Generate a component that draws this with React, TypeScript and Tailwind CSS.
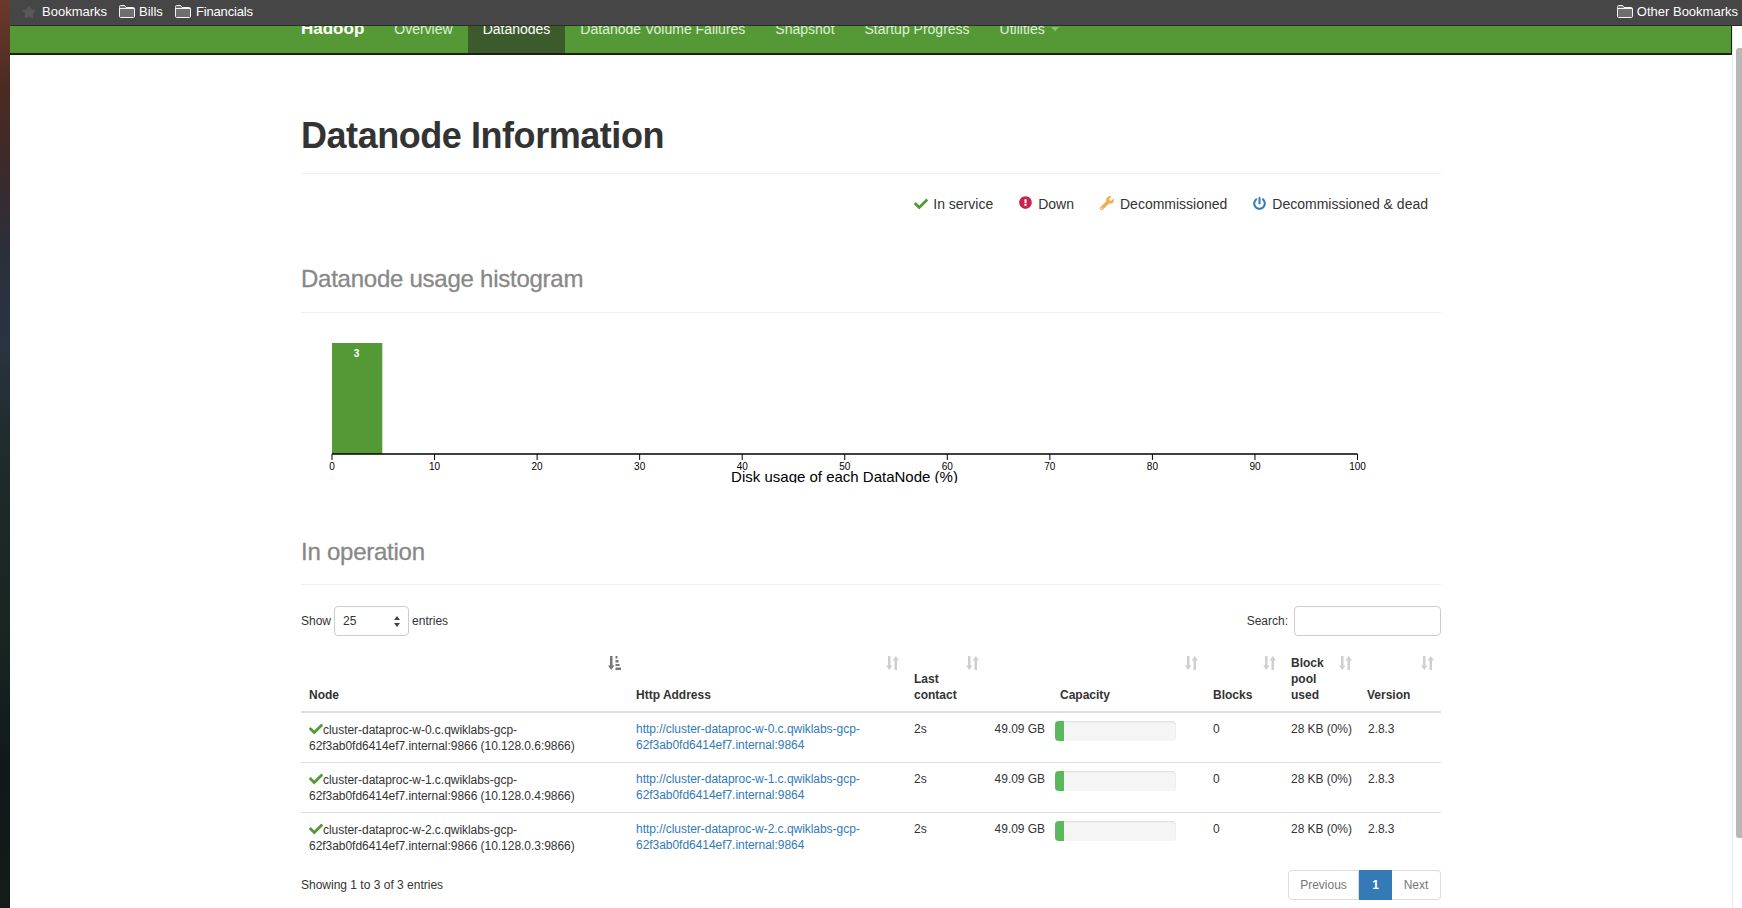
import { FaCheck, FaExclamationCircle, FaPowerOff, FaStar, FaWrench } from "react-icons/fa";

const SANS = "font-['Liberation_Sans',Arial,sans-serif]";

const navLinks = ["Overview", "Datanodes", "Datanode Volume Failures", "Snapshot", "Startup Progress", "Utilities"];

const nodes = [
  { name: "cluster-dataproc-w-0", ip: "10.128.0.6" },
  { name: "cluster-dataproc-w-1", ip: "10.128.0.4" },
  { name: "cluster-dataproc-w-2", ip: "10.128.0.3" },
];

const ticks = [0, 10, 20, 30, 40, 50, 60, 70, 80, 90, 100];

function FolderIcon() {
  return (
    <svg width="16" height="13" viewBox="0 0 16 13" className="shrink-0">
      <path d="M0.5 2.5V1.5C0.5 1 1 0.5 1.5 0.5H5.5L7 2.5H14.5C15 2.5 15.5 3 15.5 3.5V11.5C15.5 12 15 12.5 14.5 12.5H1.5C1 12.5 0.5 12 0.5 11.5V2.5Z" fill="#6f6f6f" stroke="#f4f4f4" />
      <path d="M0.5 3.5H15.5" stroke="#f4f4f4" />
    </svg>
  );
}

function SortIcon({ active = false }: { active?: boolean }) {
  return (
    <svg width="13" height="14" viewBox="0 0 13 14" className="absolute top-[9px] right-[7px]">
      {active ? (
        <g fill="#777">
          <path d="M2 0H4.5V9.5H6.5L3.2 14L0 9.5H2Z" />
          <path d="M7.5 0H9.5V2.5H7.5ZM7.5 4H10.5V6.5H7.5ZM7.5 8H11.5V10H7.5ZM7.5 11.5H13V14H7.5Z" />
        </g>
      ) : (
        <g fill="#cfcfcf">
          <path d="M2 0H4.5V9.5H6.5L3.2 14L0 9.5H2Z" />
          <path d="M8.5 14H11V4.5H13L9.8 0L6.5 4.5H8.5Z" />
        </g>
      )}
    </svg>
  );
}

function HeaderCell({ children, active, className = "", colSpan }: { children: React.ReactNode; active?: boolean; className?: string; colSpan?: number }) {
  return (
    <th colSpan={colSpan} className={`relative p-2 pr-6 text-left align-bottom font-bold ${className}`}>
      {children}
      <SortIcon active={active} />
    </th>
  );
}

function Legend() {
  return (
    <ul className="flex justify-end gap-[26px] pr-[13px] mt-[20px] h-[20px] items-center text-[14px] text-[#333]">
      <li className="flex items-center gap-[5px]">
        <FaCheck className="w-[14px] h-[14px] text-[#549936]" /> In service
      </li>
      <li className="flex items-center gap-[6px]">
        <FaExclamationCircle className="w-[13px] h-[13px] text-[#c7254e] -mt-[3px]" /> Down
      </li>
      <li className="flex items-center gap-[6px]">
        <FaWrench className="w-[14px] h-[14px] text-[#f0ad4e] -mt-[2px]" /> Decommissioned
      </li>
      <li className="flex items-center gap-[6px]">
        <FaPowerOff className="w-[13px] h-[13px] text-[#337ab7] -mt-[2px]" /> Decommissioned &amp; dead
      </li>
    </ul>
  );
}

function Histogram() {
  return (
    <svg width="1140" height="153" className="block mt-[17px]" fontFamily="Liberation Sans, Arial, sans-serif">
      <rect x="31" y="13" width="50.3" height="111" fill="#549936" />
      <text x="55.5" y="27" fontSize="10" fontWeight="bold" fill="#fff" textAnchor="middle">
        3
      </text>
      <path d="M31 124H1056.5" stroke="#000" strokeWidth="1.5" />
      {ticks.map((t) => (
        <g key={t}>
          <path d={`M${31 + t * 10.255} 124V130`} stroke="#000" />
          <text x={31 + t * 10.255} y="140" fontSize="10" textAnchor="middle" fill="#000">
            {t}
          </text>
        </g>
      ))}
      <text x="543.5" y="152" fontSize="15" textAnchor="middle" fill="#000">
        Disk usage of each DataNode (%)
      </text>
    </svg>
  );
}

function NodeTable() {
  return (
    <table className="w-full table-fixed border-collapse text-[12px] leading-[16px] text-[#333] mt-[11px]">
      <colgroup>
        <col className="w-[327px]" />
        <col className="w-[278px]" />
        <col className="w-[80px]" />
        <col className="w-[61px]" />
        <col className="w-[158px]" />
        <col className="w-[78px]" />
        <col className="w-[76px]" />
        <col className="w-[82px]" />
      </colgroup>
      <thead>
        <tr className="border-b-2 border-[#ddd]">
          <HeaderCell active>Node</HeaderCell>
          <HeaderCell>Http Address</HeaderCell>
          <HeaderCell>Last contact</HeaderCell>
          <HeaderCell colSpan={2} className="pl-[74px]">
            Capacity
          </HeaderCell>
          <HeaderCell>Blocks</HeaderCell>
          <HeaderCell>Block pool used</HeaderCell>
          <HeaderCell>Version</HeaderCell>
        </tr>
      </thead>
      <tbody className="tracking-[-0.04px]">
        {nodes.map((n) => (
          <tr key={n.name} className="border-b border-[#ddd] last:border-b-0 align-top">
            <td className="px-2 pt-[9px] pb-2">
              <FaCheck className="inline w-[14px] h-[14px] text-[#549936] -mt-[4px]" />
              {n.name}.c.qwiklabs-gcp-
              <br />
              62f3ab0fd6414ef7.internal:9866 ({n.ip}:9866)
            </td>
            <td className="p-2">
              <a className="text-[#337ab7]">
                http://{n.name}.c.qwiklabs-gcp-
                <br />
                62f3ab0fd6414ef7.internal:9864
              </a>
            </td>
            <td className="p-2">2s</td>
            <td className="py-2 pr-[2px] text-right whitespace-nowrap">49.09 GB</td>
            <td className="p-2">
              <div className="w-[121px] h-[20px] rounded bg-[#f5f5f5] shadow-[inset_0_1px_2px_rgba(0,0,0,0.1)] overflow-hidden">
                <div className="h-full w-[9px] bg-[#5cb85c]" />
              </div>
            </td>
            <td className="p-2">0</td>
            <td className="p-2 whitespace-nowrap">28 KB (0%)</td>
            <td className="p-2 pl-[9px]">2.8.3</td>
          </tr>
        ))}
      </tbody>
    </table>
  );
}

export default function App() {
  return (
    <div className={`flex h-[908px] w-[1742px] overflow-hidden bg-white ${SANS}`}>
      <div className="w-[10px] shrink-0 bg-[linear-gradient(180deg,#6a3a2b_0%,#4b2a22_10%,#3c2a2a_18%,#2b2f3c_28%,#2a3340_38%,#1f2a2a_50%,#1a2522_70%,#10181a_85%,#141c18_100%)]" />
      <div className="flex flex-col flex-1 min-w-0">
        <div className="h-[26px] shrink-0 bg-[#464646] border-b border-[#2c2c2c] flex items-center pl-[12px] pr-[4px] pb-[2px] text-[13px] text-white">
          <FaStar className="w-[14px] h-[14px] text-[#595959]" />
          <span className="ml-[6px]">Bookmarks</span>
          <span className="ml-[12px] flex items-center gap-[4px]">
            <FolderIcon /> Bills
          </span>
          <span className="ml-[12px] flex items-center gap-[5px] tracking-[-0.15px]">
            <FolderIcon /> Financials
          </span>
          <span className="ml-auto flex items-center gap-[4px]">
            <FolderIcon /> Other Bookmarks
          </span>
        </div>
        <div className="flex flex-1 min-h-0">
          <div className="flex-1 min-w-0">
            <nav className="h-[29px] bg-[#549936] border-b-2 border-[#17240f] border-r border-r-[#17240f] overflow-hidden">
              <div className="flex items-center h-[50px] -mt-[22px] pl-[291px] text-[14px] text-[#dff0d8]">
                <span className="text-[17px] font-bold text-white pr-[15px]">Hadoop</span>
                {navLinks.map((l) => (
                  <a
                    key={l}
                    className={`h-full flex items-center px-[15px] ${l === "Datanodes" ? "bg-[#3c5a2b] text-white" : ""}`}
                  >
                    {l}
                    {l === "Utilities" && (
                      <span className="ml-[6px] w-0 h-0 border-x-[4px] border-x-transparent border-t-[4px] border-t-[#8fbf78]" />
                    )}
                  </a>
                ))}
              </div>
            </nav>
            <main className="ml-[291px] w-[1140px]">
              <div className="pt-[61px] pb-[17px] border-b border-[#eee]">
                <h1 className="text-[36px] leading-[40px] font-bold tracking-[-0.45px] text-[#333]">Datanode Information</h1>
              </div>
              <Legend />
              <div className="mt-[52px] pb-[20px] border-b border-[#eee]">
                <h2 className="text-[24px] leading-[26px] tracking-[-0.25px] text-[#888] [-webkit-text-stroke:0.3px_#888]">Datanode usage histogram</h2>
              </div>
              <Histogram />
              <div className="mt-[56px] pb-[19px] border-b border-[#eee]">
                <h2 className="text-[24px] leading-[26px] tracking-[-0.25px] text-[#888] [-webkit-text-stroke:0.3px_#888]">In operation</h2>
              </div>
              <div className="flex justify-between items-center mt-[21px] text-[12px] text-[#333]">
                <div className="flex items-center gap-[3px]">
                  Show
                  <div className="w-[75px] h-[30px] border border-[#ccc] rounded-[4px] flex items-center justify-between px-2">
                    25
                    <svg width="6" height="11" viewBox="0 0 6 11">
                      <path d="M3 0L6 4H0ZM3 11L0 7H6Z" fill="#444" />
                    </svg>
                  </div>
                  entries
                </div>
                <div className="flex items-center gap-[6px]">
                  Search:
                  <div className="w-[147px] h-[30px] border border-[#ccc] rounded-[4px]" />
                </div>
              </div>
              <NodeTable />
              <div className="flex justify-between items-center mt-[8px] text-[12px] text-[#333]">
                <span>Showing 1 to 3 of 3 entries</span>
                <div className="flex h-[30px] items-stretch text-[#777]">
                  <span className="w-[71px] flex items-center justify-center border border-[#ddd] rounded-l-[4px]">Previous</span>
                  <span className="w-[33px] flex items-center justify-center bg-[#337ab7] text-white font-bold">1</span>
                  <span className="w-[49px] flex items-center justify-center border border-[#ddd] border-l-0 rounded-r-[4px]">Next</span>
                </div>
              </div>
            </main>
          </div>
          <div className="w-[10px] shrink-0 border-l border-[#e8e8e8] pl-[3px] pt-[22px]">
            <div className="w-[6px] h-[790px] rounded-l-[3px] bg-[#b8b8b8]" />
          </div>
        </div>
      </div>
    </div>
  );
}
